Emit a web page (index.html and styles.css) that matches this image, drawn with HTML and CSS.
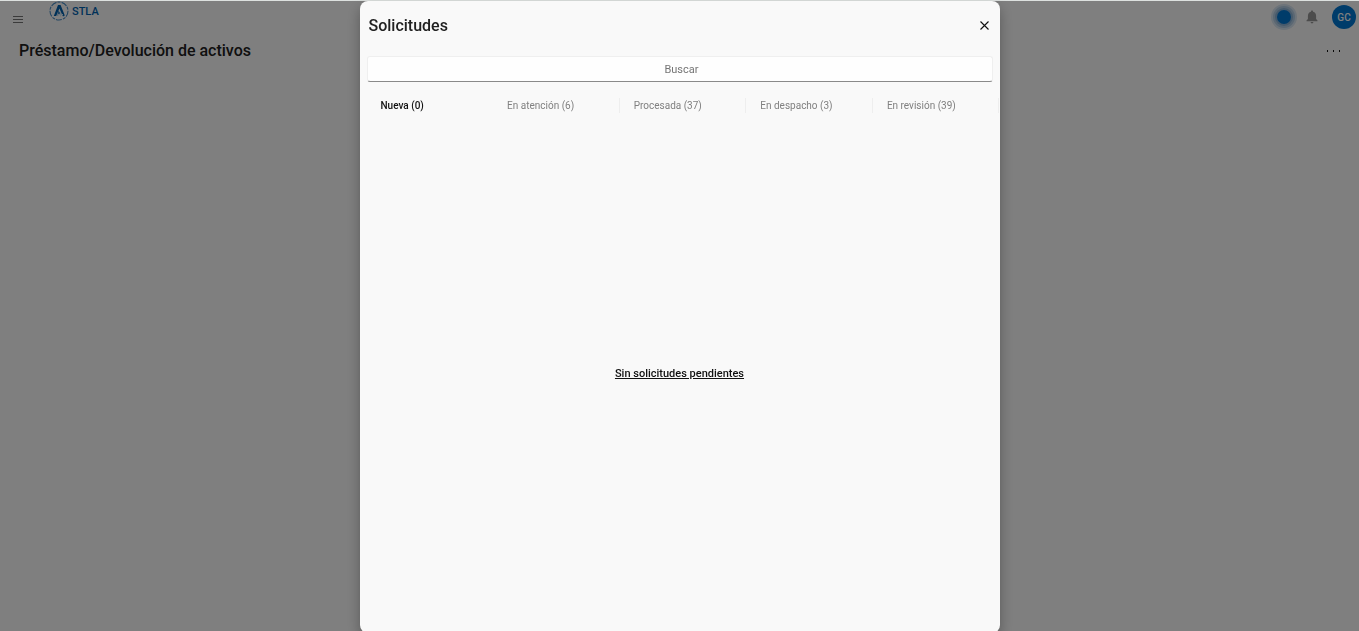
FILE: index.html
```html
<!DOCTYPE html>
<html lang="es">
<head>
  <meta charset="UTF-8">
  <meta name="viewport" content="width=device-width, initial-scale=1.0">
  <title>STLA - Préstamo/Devolución de activos</title>
  <link rel="stylesheet" href="styles.css">
</head>
<body>
<!-- Top bar -->
<header class="topbar">
  <button class="icon-btn menu-btn" type="button" aria-label="Menú">
    <svg width="10" height="8" viewBox="0 0 10 8"><path d="M0 1.500h10M0 4.500h10M0 7.500h10" stroke="#777" stroke-width="1"/></svg>
  </button>
  <a class="brand" href="#">
    <svg width="20" height="20" viewBox="0 0 20 20">
      <circle cx="10" cy="10" r="9" fill="none" stroke="#4b8fc8" stroke-width="1.100" stroke-dasharray="6 1 3 1.200"/>
      <path d="M4.800 15 9 4h2.600l4.200 10.500-1.800 1L10.400 7.500 7.200 15z" fill="#0063b1"/>
      <path d="M9 9.500 11.500 12 8.500 15z" fill="#3b86c6"/>
      <path d="M9 13.500h5M11.500 11.300v4.200" stroke="#d5e8f6" stroke-width="1"/>
    </svg>
    <span>STLA</span>
  </a>
  <div class="actions">
    <button class="icon-btn pulse" type="button" aria-label="Estado"><span class="dot"></span></button>
    <button class="icon-btn" type="button" aria-label="Notificaciones">
      <svg width="12" height="14" viewBox="0 0 12 14"><path d="M6 0.500c.7 0 1.100.5 1.100 1.200 2 .5 3 2.100 3 4.300v3l1.400 1.600v.7H.5v-.7L1.900 9V6c0-2.200 1-3.800 3-4.300C4.900 1 5.300.5 6 .5zM4.600 12h2.800c0 .8-.6 1.400-1.400 1.400S4.600 12.800 4.600 12z" fill="#999"/></svg>
    </button>
    <button class="avatar" type="button">GC</button>
  </div>
</header>

<main class="page-head">
  <h1>Préstamo/Devolución de activos</h1>
  <button class="icon-btn more-btn" type="button" aria-label="Más opciones">
    <svg width="14" height="2" viewBox="0 0 14 2"><path d="M1 0h1v2H1zM7 0h1v2H7zM13 0h1v2h-1z" fill="#111"/></svg>
  </button>
</main>

<!-- Requests dialog -->
<div class="overlay">
  <section class="dialog" role="dialog" aria-modal="true" aria-labelledby="dialog-title">
    <div class="dialog-head">
      <h2 id="dialog-title">Solicitudes</h2>
      <button class="icon-btn" type="button" aria-label="Cerrar">
        <svg width="9" height="9" viewBox="0 0 9 9"><path d="M.5.5l8 8M8.500.5l-8 8" stroke="#111" stroke-width="1.100"/></svg>
      </button>
    </div>
    <input class="search" type="text" placeholder="Buscar" aria-label="Buscar">
    <nav class="tabs">
      <button class="tab active" type="button">Nueva (0)</button>
      <button class="tab" type="button">En atención (6)</button>
      <button class="tab" type="button">Procesada (37)</button>
      <button class="tab" type="button">En despacho (3)</button>
      <button class="tab" type="button">En revisión (39)</button>
    </nav>
    <div class="empty">
      <a href="#">Sin solicitudes pendientes</a>
    </div>
  </section>
</div>
</body>
</html>
```
FILE: styles.css
```css
* {
    box-sizing: border-box;
}
body {
    margin: 0;
    font-family: Roboto, "Liberation Sans", sans-serif;
    background-color: #fff;
    color: #212121;
}
button {
    font-family: inherit;
    cursor: pointer;
}
h1, h2 {
    margin: 0;
    font-size: 16px;
    font-weight: 500;
    line-height: 20px;
}
.icon-btn {
    display: flex;
    align-items: center;
    justify-content: center;
    padding: 0;
    border: none;
    background: none;
}
.topbar {
    display: flex;
    align-items: flex-start;
    height: 34px;
    padding: 1px 3px 0 13px;
}
.menu-btn {
    margin-top: 14px;
}
.brand {
    display: flex;
    align-items: center;
    gap: 3px;
    margin-left: 26px;
    color: #0063b1;
    font-size: 11px;
    font-weight: 500;
    text-decoration: none;
}
.actions {
    display: flex;
    align-items: center;
    gap: 14px;
    height: 32px;
    margin-left: auto;
}
.pulse {
    width: 16px;
    height: 16px;
}
.dot {
    width: 14px;
    height: 14px;
    border-radius: 50%;
    background-color: #0078d4;
    box-shadow: 0 0 0 2px #8db4d8, 0 0 0 4px #b4cfe6, 0 0 0 6px #dbe8f4;
}
.avatar {
    width: 24px;
    height: 24px;
    padding: 0;
    border: none;
    border-radius: 50%;
    background-color: #0078d4;
    color: #fff;
    font-size: 10px;
    font-weight: 500;
}
.page-head {
    display: flex;
    align-items: center;
    justify-content: space-between;
    padding: 7px 19px;
}
.overlay {
    position: fixed;
    inset: 0;
    display: flex;
    justify-content: center;
    border-top: 1px solid #dde1df;
    background-color: rgba(0, 0, 0, 0.5);
    background-clip: padding-box;
}
.dialog {
    display: flex;
    flex-direction: column;
    width: 100%;
    max-width: 640px;
    margin-bottom: -2px;
    border-radius: 8px;
    background-color: #f9f9f9;
    box-shadow: 0 6px 14px rgba(0, 0, 0, 0.3);
}
.dialog-head {
    display: flex;
    align-items: center;
    justify-content: space-between;
    height: 49px;
    padding: 0 11px 0 9px;
}
.search {
    height: 26px;
    margin: 6px 7px 0;
    padding: 0 0 0 4px;
    border: 1px solid #efefef;
    border-bottom-color: #8a8a8a;
    border-radius: 3px;
    background-color: #fefefe;
    font-family: inherit;
    font-size: 11px;
    text-align: center;
}
.search::placeholder {
    color: #757575;
}
.tabs {
    display: flex;
    margin-top: 16px;
    padding-left: 7px;
}
.tab {
    flex: 1;
    height: 15px;
    padding: 0 0 0 14px;
    border: none;
    border-right: 1px solid #eee;
    background: none;
    color: #808080;
    font-size: 10px;
    line-height: 15px;
    text-align: left;
}
.tab.active {
    border-right-color: transparent;
    color: #111;
    font-weight: 500;
}
.empty {
    display: flex;
    flex: 1;
    align-items: center;
    justify-content: center;
}
.empty a {
    color: #111;
    font-size: 11px;
    font-weight: 500;
}
```
